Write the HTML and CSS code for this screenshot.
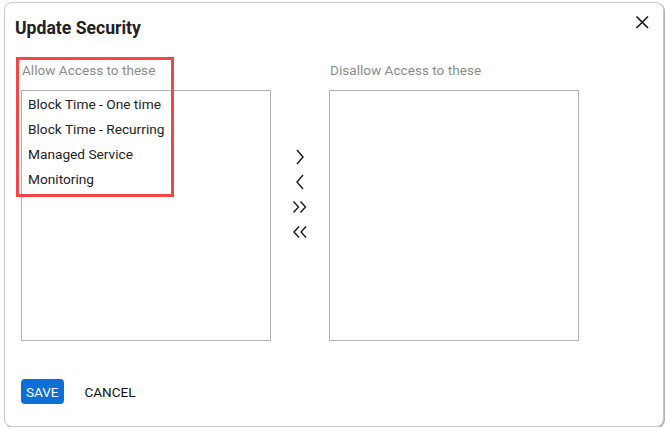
FILE: index.html
```html
<!DOCTYPE html>
<html lang="en">
<head>
    <meta charset="UTF-8">
    <title>Update Security</title>
    <link rel="stylesheet" href="styles.css">
</head>
<body>
    <div class="dialog">
        <div class="dialog-header">
            <h1>Update Security</h1>
            <button class="close-btn" aria-label="Close">
                <svg width="16" height="16" viewBox="0 0 16 16">
                    <path d="M2.5 2.5 L14 14 M14 2.5 L2.5 14" stroke="#1a1a1a" stroke-width="1.7" fill="none"/>
                </svg>
            </button>
        </div>

        <div class="dialog-body">
            <div class="column">
                <div class="list-label">Allow Access to these</div>
                <ul class="listbox">
                    <li>Block Time - One time</li>
                    <li>Block Time - Recurring</li>
                    <li>Managed Service</li>
                    <li>Monitoring</li>
                </ul>
            </div>

            <div class="mover">
                <button class="move-btn" title="Move selected">
                    <svg width="12" height="16" viewBox="0 0 12 16"><path d="M3 1 L9 8 L3 15" stroke="#1a1a1a" stroke-width="1.4" fill="none"/></svg>
                </button>
                <button class="move-btn" title="Move back selected">
                    <svg width="12" height="16" viewBox="0 0 12 16"><path d="M9 1 L3 8 L9 15" stroke="#1a1a1a" stroke-width="1.4" fill="none"/></svg>
                </button>
                <button class="move-btn" title="Move all">
                    <svg width="16" height="14" viewBox="0 0 16 14"><path d="M1.5 1.5 L6.5 7 L1.5 12.5 M8.5 1.5 L13.5 7 L8.5 12.5" stroke="#1a1a1a" stroke-width="1.4" fill="none"/></svg>
                </button>
                <button class="move-btn" title="Move all back">
                    <svg width="16" height="14" viewBox="0 0 16 14"><path d="M7 1.5 L2 7 L7 12.5 M14 1.5 L9 7 L14 12.5" stroke="#1a1a1a" stroke-width="1.4" fill="none"/></svg>
                </button>
            </div>

            <div class="column">
                <div class="list-label">Disallow Access to these</div>
                <ul class="listbox"></ul>
            </div>
        </div>

        <div class="dialog-footer">
            <button class="btn-save">SAVE</button>
            <button class="btn-cancel">CANCEL</button>
        </div>

        <!-- highlight around the allowed list -->
        <div class="highlight"></div>
    </div>
</body>
</html>
```

FILE: styles.css
```css
body {
    margin: 0;
    padding: 0;
    background-color: #fff;
    font-family: Roboto, "Liberation Sans", Arial, sans-serif;
    color: #222;
}
.dialog {
    position: relative;
    box-sizing: border-box;
    height: 425px;
    margin: 2px 1px 0 4px;
    border: 1px solid #c9c9c9;
    border-radius: 8px;
    box-shadow: 1px 1px 0 #b4b4b4;
    background-color: #fff;
}
.dialog-header {
    display: flex;
    justify-content: space-between;
    align-items: flex-start;
    padding: 11px 13px 0 10px;
}
h1 {
    margin: 2px 0 0;
    font-size: 17.6px;
    line-height: 24px;
    font-weight: bold;
    color: #222;
}
.close-btn {
    display: flex;
    padding: 0;
    border: none;
    background: none;
    cursor: pointer;
}
.dialog-body {
    display: flex;
    padding: 21px 0 0 16px;
}
.column {
    display: flex;
    flex-direction: column;
    width: 250px;
}
.list-label {
    padding-left: 1px;
    margin-bottom: 11px;
    font-size: 13.6px;
    line-height: 18px;
    color: #8c8c8c;
}
.listbox {
    box-sizing: border-box;
    height: 251px;
    margin: 0;
    padding: 1px 0 0 6px;
    list-style: none;
    border: 1px solid #b3b3b3;
}
.listbox li {
    font-size: 13.7px;
    line-height: 25px;
    color: #222;
}
.mover {
    display: flex;
    flex-direction: column;
    align-items: center;
    width: 58px;
    padding-top: 83px;
}
.move-btn {
    display: flex;
    align-items: center;
    justify-content: center;
    height: 25px;
    width: 30px;
    padding: 0;
    border: none;
    background: none;
    cursor: pointer;
}
.dialog-footer {
    display: flex;
    align-items: center;
    gap: 21px;
    padding: 38px 0 0 16px;
}
.btn-save {
    height: 25px;
    padding: 0 5px;
    border: none;
    border-radius: 4px;
    background-color: #0b6fd6;
    color: #fff;
    font-family: inherit;
    font-size: 13.5px;
    cursor: pointer;
}
.btn-cancel {
    padding: 0;
    border: none;
    background: none;
    color: #111;
    font-family: inherit;
    font-size: 13.5px;
    cursor: pointer;
}
.highlight {
    position: absolute;
    left: 11px;
    top: 54px;
    width: 158px;
    height: 140px;
    box-sizing: border-box;
    border: 3px solid #f24649;
    pointer-events: none;
}
```
